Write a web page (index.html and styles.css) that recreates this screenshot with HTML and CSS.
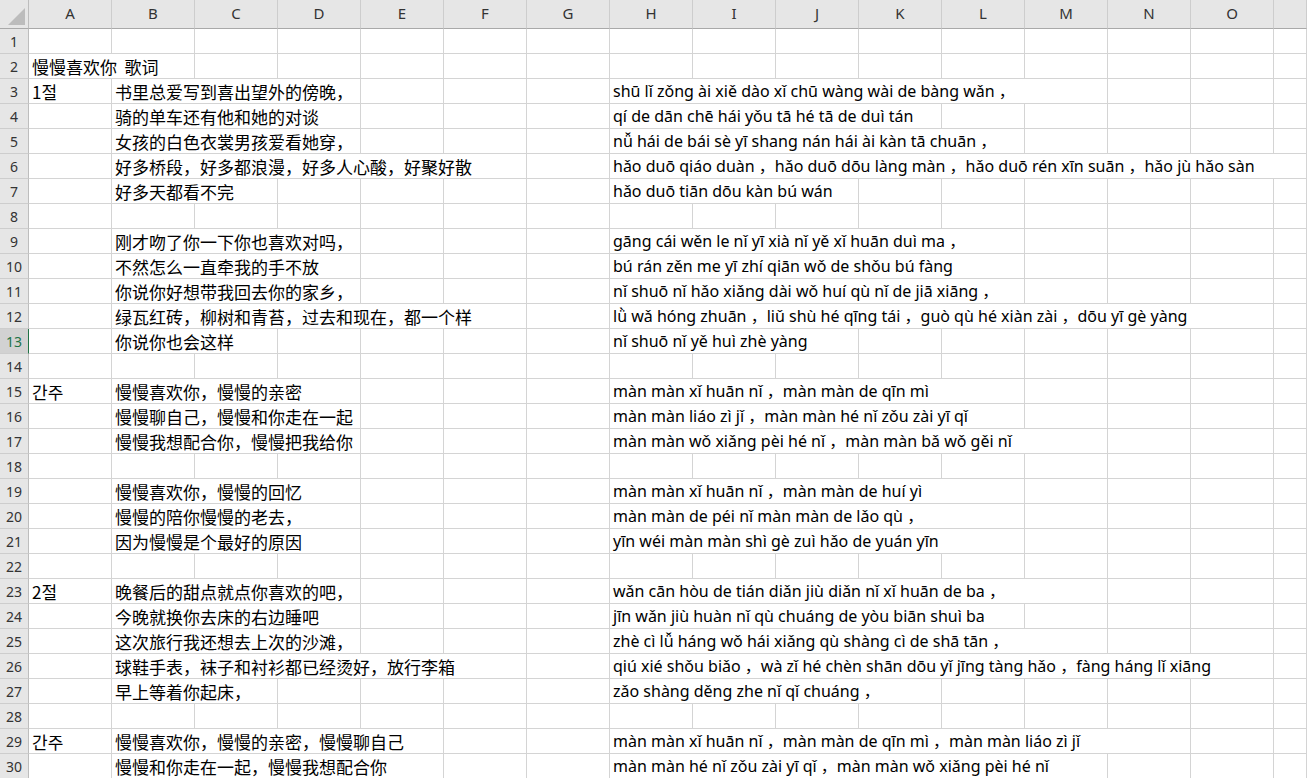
FILE: index.html
```html
<!DOCTYPE html>
<html lang="zh">
<head>
<meta charset="utf-8">
<title>慢慢喜欢你 歌词</title>
<link rel="stylesheet" href="styles.css">
</head>
<body>
<div class="sheet">
  <div class="row hdr">
    <div class="corner"><svg width="29" height="29" viewBox="0 0 29 29"><polygon points="25,8 25,25 8,25" fill="#bcbcbc"/></svg></div>
    <div class="ch">A</div><div class="ch">B</div><div class="ch">C</div><div class="ch">D</div><div class="ch">E</div><div class="ch">F</div><div class="ch">G</div><div class="ch">H</div><div class="ch">I</div><div class="ch">J</div><div class="ch">K</div><div class="ch">L</div><div class="ch">M</div><div class="ch">N</div><div class="ch">O</div><div class="ch"></div>
  </div>

  <div class="row"><div class="rh">1</div><div class="c"></div><div class="c"></div><div class="c"></div><div class="c"></div><div class="c"></div><div class="c"></div><div class="c"></div><div class="c"></div><div class="c"></div><div class="c"></div><div class="c"></div><div class="c"></div><div class="c"></div><div class="c"></div><div class="c"></div><div class="c"></div></div>

  <div class="row"><div class="rh">2</div><div class="c zh s2">慢慢喜欢你&nbsp; 歌词</div><div class="c"></div><div class="c"></div><div class="c"></div><div class="c"></div><div class="c"></div><div class="c"></div><div class="c"></div><div class="c"></div><div class="c"></div><div class="c"></div><div class="c"></div><div class="c"></div><div class="c"></div><div class="c"></div></div>

  <div class="row"><div class="rh">3</div><div class="c ko">1절</div><div class="c zh s3">书里总爱写到喜出望外的傍晚，</div><div class="c"></div><div class="c"></div><div class="c"></div><div class="c py s6">shū lǐ zǒng ài xiě dào xǐ chū wàng wài de bàng wǎn ，</div><div class="c"></div><div class="c"></div><div class="c"></div></div>

  <div class="row"><div class="rh">4</div><div class="c"></div><div class="c zh s3">骑的单车还有他和她的对谈</div><div class="c"></div><div class="c"></div><div class="c"></div><div class="c py s4">qí de dān chē hái yǒu tā hé tā de duì tán</div><div class="c"></div><div class="c"></div><div class="c"></div><div class="c"></div><div class="c"></div></div>

  <div class="row"><div class="rh">5</div><div class="c"></div><div class="c zh s3">女孩的白色衣裳男孩爱看她穿，</div><div class="c"></div><div class="c"></div><div class="c"></div><div class="c py s5">nǚ hái de bái sè yī shang nán hái ài kàn tā chuān ，</div><div class="c"></div><div class="c"></div><div class="c"></div><div class="c"></div></div>

  <div class="row"><div class="rh">6</div><div class="c"></div><div class="c zh s5">好多桥段，好多都浪漫，好多人心酸，好聚好散</div><div class="c"></div><div class="c py s9">hǎo duō qiáo duàn ，hǎo duō dōu làng màn ，hǎo duō rén xīn suān ，hǎo jù hǎo sàn</div></div>

  <div class="row"><div class="rh">7</div><div class="c"></div><div class="c zh s2">好多天都看不完</div><div class="c"></div><div class="c"></div><div class="c"></div><div class="c"></div><div class="c py s3">hǎo duō tiān dōu kàn bú wán</div><div class="c"></div><div class="c"></div><div class="c"></div><div class="c"></div><div class="c"></div><div class="c"></div></div>

  <div class="row"><div class="rh">8</div><div class="c"></div><div class="c"></div><div class="c"></div><div class="c"></div><div class="c"></div><div class="c"></div><div class="c"></div><div class="c"></div><div class="c"></div><div class="c"></div><div class="c"></div><div class="c"></div><div class="c"></div><div class="c"></div><div class="c"></div><div class="c"></div></div>

  <div class="row"><div class="rh">9</div><div class="c"></div><div class="c zh s3">刚才吻了你一下你也喜欢对吗，</div><div class="c"></div><div class="c"></div><div class="c"></div><div class="c py s5">gāng cái wěn le nǐ yī xià nǐ yě xǐ huān duì ma ，</div><div class="c"></div><div class="c"></div><div class="c"></div><div class="c"></div></div>

  <div class="row"><div class="rh">10</div><div class="c"></div><div class="c zh s3">不然怎么一直牵我的手不放</div><div class="c"></div><div class="c"></div><div class="c"></div><div class="c py s5">bú rán zěn me yī zhí qiān wǒ de shǒu bú fàng</div><div class="c"></div><div class="c"></div><div class="c"></div><div class="c"></div></div>

  <div class="row"><div class="rh">11</div><div class="c"></div><div class="c zh s3">你说你好想带我回去你的家乡，</div><div class="c"></div><div class="c"></div><div class="c"></div><div class="c py s5">nǐ shuō nǐ hǎo xiǎng dài wǒ huí qù nǐ de jiā xiāng ，</div><div class="c"></div><div class="c"></div><div class="c"></div><div class="c"></div></div>

  <div class="row"><div class="rh">12</div><div class="c"></div><div class="c zh s5">绿瓦红砖，柳树和青苔，过去和现在，都一个样</div><div class="c"></div><div class="c py s8">lǜ wǎ hóng zhuān ，liǔ shù hé qīng tái ，guò qù hé xiàn zài ，dōu yī gè yàng</div><div class="c"></div></div>

  <div class="row"><div class="rh sel">13</div><div class="c"></div><div class="c zh s2">你说你也会这样</div><div class="c"></div><div class="c"></div><div class="c"></div><div class="c"></div><div class="c py s3">nǐ shuō nǐ yě huì zhè yàng</div><div class="c"></div><div class="c"></div><div class="c"></div><div class="c"></div><div class="c"></div><div class="c"></div></div>

  <div class="row"><div class="rh">14</div><div class="c"></div><div class="c"></div><div class="c"></div><div class="c"></div><div class="c"></div><div class="c"></div><div class="c"></div><div class="c"></div><div class="c"></div><div class="c"></div><div class="c"></div><div class="c"></div><div class="c"></div><div class="c"></div><div class="c"></div><div class="c"></div></div>

  <div class="row"><div class="rh">15</div><div class="c ko">간주</div><div class="c zh s3">慢慢喜欢你，慢慢的亲密</div><div class="c"></div><div class="c"></div><div class="c"></div><div class="c py s5">màn màn xǐ huān nǐ ，màn màn de qīn mì</div><div class="c"></div><div class="c"></div><div class="c"></div><div class="c"></div></div>

  <div class="row"><div class="rh">16</div><div class="c"></div><div class="c zh s3">慢慢聊自己，慢慢和你走在一起</div><div class="c"></div><div class="c"></div><div class="c"></div><div class="c py s5">màn màn liáo zì jǐ ，màn màn hé nǐ zǒu zài yī qǐ</div><div class="c"></div><div class="c"></div><div class="c"></div><div class="c"></div></div>

  <div class="row"><div class="rh">17</div><div class="c"></div><div class="c zh s3">慢慢我想配合你，慢慢把我给你</div><div class="c"></div><div class="c"></div><div class="c"></div><div class="c py s6">màn màn wǒ xiǎng pèi hé nǐ ，màn màn bǎ wǒ gěi nǐ</div><div class="c"></div><div class="c"></div><div class="c"></div></div>

  <div class="row"><div class="rh">18</div><div class="c"></div><div class="c"></div><div class="c"></div><div class="c"></div><div class="c"></div><div class="c"></div><div class="c"></div><div class="c"></div><div class="c"></div><div class="c"></div><div class="c"></div><div class="c"></div><div class="c"></div><div class="c"></div><div class="c"></div><div class="c"></div></div>

  <div class="row"><div class="rh">19</div><div class="c"></div><div class="c zh s3">慢慢喜欢你，慢慢的回忆</div><div class="c"></div><div class="c"></div><div class="c"></div><div class="c py s5">màn màn xǐ huān nǐ ，màn màn de huí yì</div><div class="c"></div><div class="c"></div><div class="c"></div><div class="c"></div></div>

  <div class="row"><div class="rh">20</div><div class="c"></div><div class="c zh s3">慢慢的陪你慢慢的老去，</div><div class="c"></div><div class="c"></div><div class="c"></div><div class="c py s5">màn màn de péi nǐ màn màn de lǎo qù ，</div><div class="c"></div><div class="c"></div><div class="c"></div><div class="c"></div></div>

  <div class="row"><div class="rh">21</div><div class="c"></div><div class="c zh s3">因为慢慢是个最好的原因</div><div class="c"></div><div class="c"></div><div class="c"></div><div class="c py s5">yīn wéi màn màn shì gè zuì hǎo de yuán yīn</div><div class="c"></div><div class="c"></div><div class="c"></div><div class="c"></div></div>

  <div class="row"><div class="rh">22</div><div class="c"></div><div class="c"></div><div class="c"></div><div class="c"></div><div class="c"></div><div class="c"></div><div class="c"></div><div class="c"></div><div class="c"></div><div class="c"></div><div class="c"></div><div class="c"></div><div class="c"></div><div class="c"></div><div class="c"></div><div class="c"></div></div>

  <div class="row"><div class="rh">23</div><div class="c ko">2절</div><div class="c zh s3">晚餐后的甜点就点你喜欢的吧，</div><div class="c"></div><div class="c"></div><div class="c"></div><div class="c py s6">wǎn cān hòu de tián diǎn jiù diǎn nǐ xǐ huān de ba ，</div><div class="c"></div><div class="c"></div><div class="c"></div></div>

  <div class="row"><div class="rh">24</div><div class="c"></div><div class="c zh s3">今晚就换你去床的右边睡吧</div><div class="c"></div><div class="c"></div><div class="c"></div><div class="c py s5">jīn wǎn jiù huàn nǐ qù chuáng de yòu biān shuì ba</div><div class="c"></div><div class="c"></div><div class="c"></div><div class="c"></div></div>

  <div class="row"><div class="rh">25</div><div class="c"></div><div class="c zh s3">这次旅行我还想去上次的沙滩，</div><div class="c"></div><div class="c"></div><div class="c"></div><div class="c py s6">zhè cì lǚ háng wǒ hái xiǎng qù shàng cì de shā tān ，</div><div class="c"></div><div class="c"></div><div class="c"></div></div>

  <div class="row"><div class="rh">26</div><div class="c"></div><div class="c zh s5">球鞋手表，袜子和衬衫都已经烫好，放行李箱</div><div class="c"></div><div class="c py s8">qiú xié shǒu biǎo ，wà zǐ hé chèn shān dōu yǐ jīng tàng hǎo ，fàng háng lǐ xiāng</div><div class="c"></div></div>

  <div class="row"><div class="rh">27</div><div class="c"></div><div class="c zh s2">早上等着你起床，</div><div class="c"></div><div class="c"></div><div class="c"></div><div class="c"></div><div class="c py s4">zǎo shàng děng zhe nǐ qǐ chuáng ，</div><div class="c"></div><div class="c"></div><div class="c"></div><div class="c"></div><div class="c"></div></div>

  <div class="row"><div class="rh">28</div><div class="c"></div><div class="c"></div><div class="c"></div><div class="c"></div><div class="c"></div><div class="c"></div><div class="c"></div><div class="c"></div><div class="c"></div><div class="c"></div><div class="c"></div><div class="c"></div><div class="c"></div><div class="c"></div><div class="c"></div><div class="c"></div></div>

  <div class="row"><div class="rh">29</div><div class="c ko">간주</div><div class="c zh s4">慢慢喜欢你，慢慢的亲密，慢慢聊自己</div><div class="c"></div><div class="c"></div><div class="c py s7">màn màn xǐ huān nǐ ，màn màn de qīn mì ，màn màn liáo zì jǐ</div><div class="c"></div><div class="c"></div></div>

  <div class="row"><div class="rh">30</div><div class="c"></div><div class="c zh s4">慢慢和你走在一起，慢慢我想配合你</div><div class="c"></div><div class="c"></div><div class="c py s6">màn màn hé nǐ zǒu zài yī qǐ ，màn màn wǒ xiǎng pèi hé nǐ</div><div class="c"></div><div class="c"></div><div class="c"></div></div>
</div>
</body>
</html>
```
FILE: styles.css
```css
html, body {
  margin: 0;
  padding: 0;
  background: #ffffff;
}
body {
  width: 1307px;
  height: 778px;
  overflow: hidden;
  font-family: "Noto Sans", "Noto Sans CJK SC", sans-serif;
  color: #000;
}
.sheet {
  width: 1307px;
  height: 778px;
  overflow: hidden;
}
.row {
  display: grid;
  grid-template-columns: 29px repeat(15, 83px) 33px;
  height: 25px;
}
.row.hdr {
  height: 29px;
  background: #e6e6e6;
}
.corner {
  border-right: 1px solid #bdbdbd;
  border-bottom: 1px solid #a9a9a9;
  box-sizing: border-box;
  overflow: hidden;
}
.corner svg {
  display: block;
}
.ch {
  box-sizing: border-box;
  border-right: 1px solid #cdcdcd;
  border-bottom: 1px solid #a9a9a9;
  display: flex;
  align-items: center;
  justify-content: center;
  font-family: "Noto Sans", sans-serif;
  font-size: 15px;
  color: #333;
  padding-bottom: 2px;
}
.rh {
  box-sizing: border-box;
  background: #e6e6e6;
  border-right: 1px solid #bdbdbd;
  border-bottom: 1px solid #cdcdcd;
  display: flex;
  align-items: center;
  justify-content: center;
  font-family: "Noto Sans", sans-serif;
  font-size: 14px;
  color: #333;
}
.rh.sel {
  background: #d2d2d2;
  color: #217346;
  border-right: 1px solid #217346;
}
.c {
  box-sizing: border-box;
  border-right: 1px solid #d4d4d4;
  border-bottom: 1px solid #d4d4d4;
  min-width: 0;
  white-space: nowrap;
  display: flex;
  align-items: center;
  padding-left: 3px;
  overflow: visible;
  font-size: 16px;
  line-height: 1;
}
.zh {
  font-family: "Noto Sans CJK SC", sans-serif;
  font-size: 17px;
}
.ko {
  font-family: "Noto Sans CJK KR", sans-serif;
  font-size: 17px;
}
.py {
  font-family: "Noto Sans", "Noto Sans CJK SC", sans-serif;
  font-size: 16px;
  padding-left: 3px;
}
.s2 { grid-column: span 2; }
.s3 { grid-column: span 3; }
.s4 { grid-column: span 4; }
.s5 { grid-column: span 5; }
.s6 { grid-column: span 6; }
.s7 { grid-column: span 7; }
.s8 { grid-column: span 8; }
.s9 { grid-column: span 9; }
```
